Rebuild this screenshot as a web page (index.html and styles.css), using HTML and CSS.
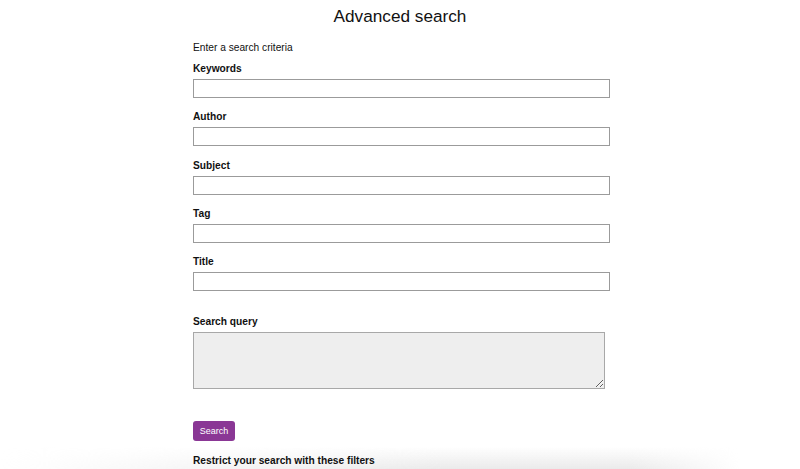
FILE: index.html
```html
<!DOCTYPE html>
<html lang="en">
<head>
<meta charset="utf-8">
<title>Advanced search</title>
<link rel="stylesheet" href="styles.css">
</head>
<body>
<h1 class="title">Advanced search</h1>
<form class="form">
  <p class="intro">Enter a search criteria</p>
  <div class="field">
    <label class="label" for="kw">Keywords</label>
    <input class="input" id="kw" type="text">
  </div>
  <div class="field">
    <label class="label" for="au">Author</label>
    <input class="input" id="au" type="text">
  </div>
  <div class="field">
    <label class="label" for="su">Subject</label>
    <input class="input" id="su" type="text">
  </div>
  <div class="field">
    <label class="label" for="tg">Tag</label>
    <input class="input" id="tg" type="text">
  </div>
  <div class="field">
    <label class="label" for="ti">Title</label>
    <input class="input" id="ti" type="text">
  </div>
  <div class="field field-query">
    <label class="label" for="q">Search query</label>
    <textarea class="textarea" id="q"></textarea>
  </div>
  <button class="button" type="button">Search</button>
  <p class="label restrict">Restrict your search with these filters</p>
</form>
<div class="shade"></div>
</body>
</html>
```
FILE: styles.css
```css
html, body {
  margin: 0;
  padding: 0;
  background: #ffffff;
}
body {
  font-family: "Liberation Sans", Arial, sans-serif;
  color: #111111;
  overflow: hidden;
  height: 469px;
  position: relative;
}
.title {
  margin: 5px 0 0;
  font-size: 17.2px;
  line-height: 22px;
  font-weight: normal;
  text-align: center;
}
.form {
  width: 417px;
  margin: 13px 0 0 193px;
  display: flex;
  flex-direction: column;
  align-items: flex-start;
  position: relative;
  z-index: 1;
}
.intro {
  margin: 0;
  padding-top: 1px;
  font-size: 10.2px;
  line-height: 14px;
}
.field {
  display: flex;
  flex-direction: column;
  align-items: flex-start;
  width: 100%;
  margin-top: 6px;
}
.field + .field {
  margin-top: 11.3px;
}
.field.field-query {
  margin-top: 22.5px;
}
.label {
  display: block;
  margin: 0 0 3px;
  padding-top: 1px;
  font-size: 10.2px;
  line-height: 14px;
  font-weight: bold;
}
.input {
  box-sizing: border-box;
  width: 417px;
  height: 19px;
  margin: 0;
  padding: 0 3px;
  border: 1px solid #9b9b9b;
  border-radius: 0;
  background: #ffffff;
  font: 10px "Liberation Sans", Arial, sans-serif;
}
.textarea {
  box-sizing: border-box;
  width: 412px;
  height: 57px;
  margin: 0;
  padding: 2px;
  border: 1px solid #a8a8a8;
  background: #eeeeee;
  font: 10px "Liberation Sans", Arial, sans-serif;
}
.button {
  margin-top: 32.5px;
  box-sizing: border-box;
  width: 42px;
  height: 20px;
  padding: 0;
  border: none;
  border-radius: 3px;
  background: #8a3795;
  color: #ffffff;
  font: 9px "Liberation Sans", Arial, sans-serif;
  cursor: pointer;
}
.restrict {
  margin-top: 12px;
}
.shade {
  position: absolute;
  left: 0;
  bottom: 0;
  width: 740px;
  height: 22px;
  background: linear-gradient(to bottom, rgba(235,235,235,0), rgba(232,232,232,0.9));
  -webkit-mask-image: linear-gradient(to right, rgba(0,0,0,0) 0, #000 60%, #000 85%, rgba(0,0,0,0) 100%);
  mask-image: linear-gradient(to right, rgba(0,0,0,0) 0, #000 60%, #000 85%, rgba(0,0,0,0) 100%);
  pointer-events: none;
  z-index: 0;
}
```
